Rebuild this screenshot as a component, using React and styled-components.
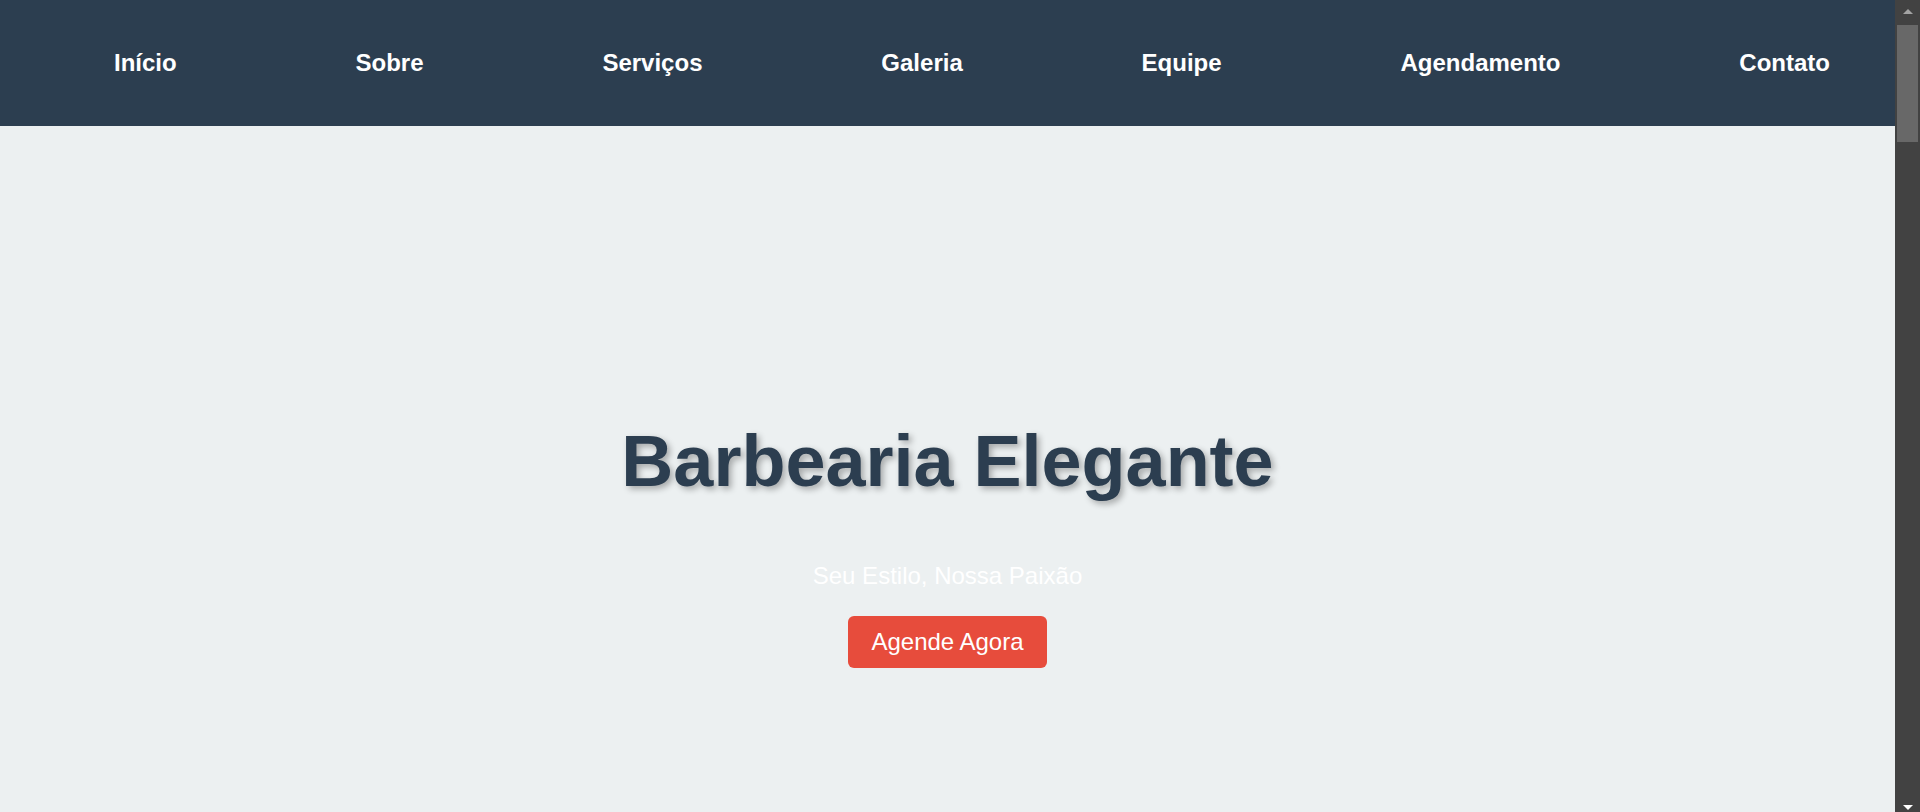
import React from 'react';
import styled, { createGlobalStyle } from 'styled-components';

const GlobalStyle = createGlobalStyle`
  * {
    box-sizing: border-box;
  }
  body {
    margin: 0;
    padding-right: 25px;
    font-family: 'Liberation Sans', Arial, sans-serif;
    background: #ecf0f1;
    overflow: hidden;
  }
`;

const links = [
  { href: '#inicio', label: 'Início' },
  { href: '#sobre', label: 'Sobre' },
  { href: '#servicos', label: 'Serviços' },
  { href: '#galeria', label: 'Galeria' },
  { href: '#equipe', label: 'Equipe' },
  { href: '#agendamento', label: 'Agendamento' },
  { href: '#contato', label: 'Contato' },
];

const App = () => {
  return (
    <>
      <GlobalStyle />
      <Header>
        <NavList>
          {links.map((link) => (
            <li key={link.href}>
              <NavLink href={link.href}>{link.label}</NavLink>
            </li>
          ))}
        </NavList>
      </Header>

      <Hero id="inicio">
        <Title>Barbearia Elegante</Title>
        <Subtitle>Seu Estilo, Nossa Paixão</Subtitle>
        <CtaButton href="#agendamento">Agende Agora</CtaButton>
      </Hero>

      {/* barra de rolagem da janela, por cima do conteúdo */}
      <ScrollRail aria-hidden="true">
        <ScrollArrow>
          <ArrowUp />
        </ScrollArrow>
        <ScrollThumb />
        <ScrollArrow $bottom>
          <ArrowDown />
        </ScrollArrow>
      </ScrollRail>
    </>
  );
};

export default App;

const Header = styled.header`
  background: #2c3e50;
  height: 126px;
`;

const NavList = styled.ul`
  list-style: none;
  margin: 0;
  padding: 0 65px 0 114px;
  height: 100%;
  display: flex;
  justify-content: space-between;
  align-items: center;
`;

const NavLink = styled.a`
  color: #ffffff;
  text-decoration: none;
  font-size: 24px;
  font-weight: bold;
`;

const Hero = styled.section`
  height: 835px;
  display: flex;
  flex-direction: column;
  align-items: center;
  justify-content: center;
  text-align: center;
`;

const Title = styled.h1`
  margin: 0 0 60px;
  font-size: 72px;
  font-weight: bold;
  color: #2c3e50;
  text-shadow: 3px 3px 6px rgba(0, 0, 0, 0.3);
`;

const Subtitle = styled.p`
  margin: 0 0 26px;
  font-size: 24px;
  color: #ffffff;
`;

const CtaButton = styled.a`
  display: inline-block;
  background: #e74c3c;
  color: #ffffff;
  font-size: 24px;
  padding: 12px 23.5px;
  border-radius: 6px;
  text-decoration: none;
`;

const ScrollRail = styled.div`
  position: fixed;
  top: 0;
  right: 0;
  width: 25px;
  height: 100vh;
  background: #424242;
  display: flex;
  flex-direction: column;
`;

const ScrollArrow = styled.div`
  height: 25px;
  display: flex;
  justify-content: center;
  align-items: center;
  margin-top: ${(props) => (props.$bottom ? 'auto' : '0')};
`;

const ArrowUp = styled.span`
  width: 0;
  height: 0;
  border-left: 5px solid transparent;
  border-right: 5px solid transparent;
  border-bottom: 5px solid #a3a3a3;
  margin-bottom: 2px;
`;

const ArrowDown = styled.span`
  width: 0;
  height: 0;
  border-left: 5px solid transparent;
  border-right: 5px solid transparent;
  border-top: 5px solid #ffffff;
  margin-top: 16px;
`;

const ScrollThumb = styled.div`
  height: 117px;
  margin: 0 2px;
  background: #686868;
`;
